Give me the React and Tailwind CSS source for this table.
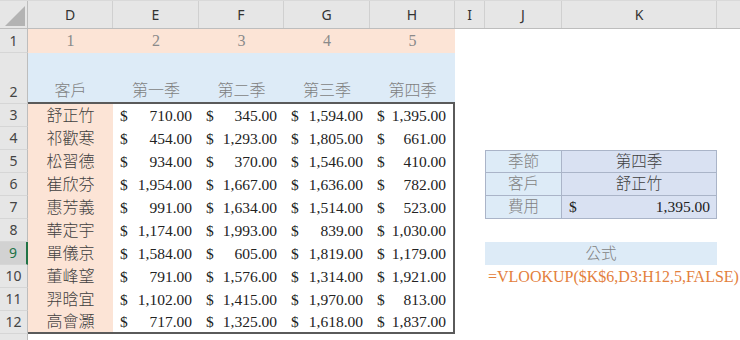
import React from "react";

const SERIF = "font-['Liberation_Serif','Times_New_Roman','Noto_Sans_CJK_TC',serif]";
const UI = "font-['Noto_Sans','Open_Sans',sans-serif]";

const COLS = [
  { l: "D", w: "w-[85px]" },
  { l: "E", w: "w-[86px]" },
  { l: "F", w: "w-[85px]" },
  { l: "G", w: "w-[86px]" },
  { l: "H", w: "w-[85px]" },
  { l: "I", w: "w-[30px]" },
  { l: "J", w: "w-[77px]" },
  { l: "K", w: "w-[155px]" },
];

const QUARTERS = ["第一季", "第二季", "第三季", "第四季"];

const DATA = [
  ["舒正竹", "710.00", "345.00", "1,594.00", "1,395.00"],
  ["祁歡寒", "454.00", "1,293.00", "1,805.00", "661.00"],
  ["松習德", "934.00", "370.00", "1,546.00", "410.00"],
  ["崔欣芬", "1,954.00", "1,667.00", "1,636.00", "782.00"],
  ["惠芳義", "991.00", "1,634.00", "1,514.00", "523.00"],
  ["華定宇", "1,174.00", "1,993.00", "839.00", "1,030.00"],
  ["單儀京", "1,584.00", "605.00", "1,819.00", "1,179.00"],
  ["董峰望", "791.00", "1,576.00", "1,314.00", "1,921.00"],
  ["羿晗宜", "1,102.00", "1,415.00", "1,970.00", "813.00"],
  ["高會灝", "717.00", "1,325.00", "1,618.00", "1,837.00"],
];

// 右邊查詢表 J5:K7
const LOOKUP = {
  5: ["季節", "第四季"],
  6: ["客戶", "舒正竹"],
  7: ["費用", null],
};

function RowHead({ n, selected, align = "items-center" }) {
  return (
    <div
      className={`w-[28px] shrink-0 flex justify-center ${align} ${UI} text-[14px] border-b border-[#d6d6d6] ${
        selected
          ? "bg-[#d2d2d2] text-[#217346] border-r-2 border-r-[#217346]"
          : "bg-[#e6e6e6] text-[#444] border-r border-r-[#bdbdbd]"
      }`}
    >
      {n}
    </div>
  );
}

function Money({ v, w, last, bottom }) {
  return (
    <div
      className={`${w} shrink-0 flex items-center justify-between pl-[7px] pr-[7px] text-[#222] ${
        last ? "border-r-2 border-r-[#5a5a5a]" : ""
      } ${bottom ? "border-b-2 border-b-[#5a5a5a]" : ""}`}
    >
      <span>$</span>
      <span>{v}</span>
    </div>
  );
}

function RightSide({ r }) {
  if (LOOKUP[r]) {
    const [k, v] = LOOKUP[r];
    const first = r === 5;
    return (
      <div className="flex">
        <div className="w-[30px] shrink-0" />
        <div
          className={`w-[77px] shrink-0 flex items-center justify-center bg-[#ddebf7] text-[#7f7f7f] font-light border-l border-r border-b border-[#aab4c8] ${
            first ? "border-t" : ""
          }`}
        >
          {k}
        </div>
        <div
          className={`w-[155px] shrink-0 flex items-center bg-[#d9e1f2] border-r border-b border-[#aab4c8] ${
            first ? "border-t" : ""
          } ${v ? "justify-center text-[#404040] font-light" : "justify-between pl-[7px] pr-[6px] text-[#222]"}`}
        >
          {v ? v : (
            <>
              <span>$</span>
              <span>1,395.00</span>
            </>
          )}
        </div>
      </div>
    );
  }
  if (r === 9) {
    return (
      <div className="flex">
        <div className="w-[30px] shrink-0" />
        <div className="w-[232px] shrink-0 flex items-center justify-center bg-[#ddebf7] text-[#7f7f7f] font-light">公式</div>
      </div>
    );
  }
  if (r === 10) {
    return (
      <div className="flex">
        <div className="w-[30px] shrink-0" />
        <div className="pl-[3px] flex items-center whitespace-nowrap text-[#e3803c] text-[16px]">
          =VLOOKUP($K$6,D3:H12,5,FALSE)
        </div>
      </div>
    );
  }
  return null;
}

export default function App() {
  return (
    <div className={`w-[740px] h-[340px] overflow-hidden bg-white ${SERIF} text-[15.5px] leading-none`}>
      {/* 欄標題 */}
      <div className={`flex h-[29px] bg-[#e6e6e6] border-t border-[#d9d9d9] border-b border-b-[#bdbdbd] ${UI} text-[14px] text-[#333]`}>
        <div className="w-[28px] shrink-0 flex items-end justify-end border-r border-[#bdbdbd] pr-[2px] pb-[2px]">
          <svg width="20" height="20" viewBox="0 0 20 20">
            <polygon points="20,0 20,20 0,20" fill="#b3b3b3" />
          </svg>
        </div>
        {COLS.map((c) => (
          <div key={c.l} className={`${c.w} shrink-0 flex items-center justify-center border-r border-[#d0d0d0]`}>
            {c.l}
          </div>
        ))}
        <div className="flex-1" />
      </div>

      {/* 第1列：欄號 */}
      <div className="flex h-[24px]">
        <RowHead n={1} />
        {COLS.slice(0, 5).map((c, i) => (
          <div key={c.l} className={`${c.w} shrink-0 flex items-center justify-center bg-[#fce4d6] text-[#8a8a8a] text-[16px]`}>
            {i + 1}
          </div>
        ))}
      </div>

      {/* 第2列：標題 */}
      <div className="flex h-[51px]">
        <RowHead n={2} align="items-end pb-[4px]" />
        {["客戶", ...QUARTERS].map((t, i) => (
          <div
            key={t}
            className={`${COLS[i].w} shrink-0 flex items-end justify-center pb-[3px] bg-[#ddebf7] text-[#7f7f7f] text-[16px] font-light border-b-2 border-b-[#5a5a5a]`}
          >
            {t}
          </div>
        ))}
      </div>

      {/* 第3~12列：資料 */}
      {DATA.map((row, idx) => {
        const r = idx + 3;
        const bottom = r === 12;
        return (
          <div key={r} className="flex h-[23px]">
            <RowHead n={r} selected={r === 9} />
            <div
              className={`w-[85px] shrink-0 flex items-center justify-center bg-[#fce4d6] text-[#404040] text-[16px] font-light ${
                bottom ? "border-b-2 border-b-[#5a5a5a]" : ""
              }`}
            >
              {row[0]}
            </div>
            {row.slice(1).map((v, i) => (
              <Money key={i} v={v} w={COLS[i + 1].w} last={i === 3} bottom={bottom} />
            ))}
            <RightSide r={r} />
          </div>
        );
      })}

      <div className="flex h-[23px]">
        <RowHead n="" />
      </div>
    </div>
  );
}
